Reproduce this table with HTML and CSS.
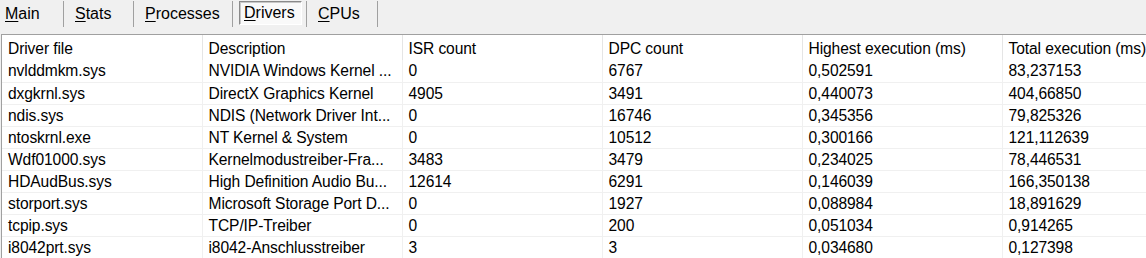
FILE: index.html
```html
<!DOCTYPE html>
<html lang="en">
<head>
  <meta charset="UTF-8">
  <title>Drivers</title>
  <link rel="stylesheet" href="styles.css">
</head>
<body>

  <div class="tabs">
    <div class="tab tab-main"><span><u>M</u>ain</span></div>
    <div class="tab tab-stats"><span><u>S</u>tats</span></div>
    <div class="tab tab-processes"><span><u>P</u>rocesses</span></div>
    <div class="tab tab-drivers"><span class="pressed"><u>D</u>rivers</span></div>
    <div class="tab tab-cpus"><span><u>C</u>PUs</span></div>
  </div>

  <div class="list">
    <table>
      <thead>
        <tr>
          <th>Driver file</th>
          <th>Description</th>
          <th>ISR count</th>
          <th>DPC count</th>
          <th>Highest execution (ms)</th>
          <th>Total execution (ms)</th>
        </tr>
      </thead>
      <tbody>
        <tr><td>nvlddmkm.sys</td><td>NVIDIA Windows Kernel ...</td><td>0</td><td>6767</td><td>0,502591</td><td>83,237153</td></tr>
        <tr><td>dxgkrnl.sys</td><td>DirectX Graphics Kernel</td><td>4905</td><td>3491</td><td>0,440073</td><td>404,66850</td></tr>
        <tr><td>ndis.sys</td><td>NDIS (Network Driver Int...</td><td>0</td><td>16746</td><td>0,345356</td><td>79,825326</td></tr>
        <tr><td>ntoskrnl.exe</td><td>NT Kernel &amp; System</td><td>0</td><td>10512</td><td>0,300166</td><td>121,112639</td></tr>
        <tr><td>Wdf01000.sys</td><td>Kernelmodustreiber-Fra...</td><td>3483</td><td>3479</td><td>0,234025</td><td>78,446531</td></tr>
        <tr><td>HDAudBus.sys</td><td>High Definition Audio Bu...</td><td>12614</td><td>6291</td><td>0,146039</td><td>166,350138</td></tr>
        <tr><td>storport.sys</td><td>Microsoft Storage Port D...</td><td>0</td><td>1927</td><td>0,088984</td><td>18,891629</td></tr>
        <tr><td>tcpip.sys</td><td>TCP/IP-Treiber</td><td>0</td><td>200</td><td>0,051034</td><td>0,914265</td></tr>
        <tr><td>i8042prt.sys</td><td>i8042-Anschlusstreiber</td><td>3</td><td>3</td><td>0,034680</td><td>0,127398</td></tr>
      </tbody>
    </table>
  </div>

</body>
</html>
```

FILE: styles.css
```css
* {
  margin: 0;
  padding: 0;
  box-sizing: border-box;
}

body {
  font-family: 'Liberation Sans', Arial, sans-serif;
  font-size: 16px;
  color: #000;
  background-color: #f0f0f0;
  overflow: hidden;
}

u {
  text-decoration-thickness: 1px;
  text-underline-offset: 2px;
}

.tabs {
  display: flex;
  height: 34px;
  background-color: #f0f0f0;
}

.tab {
  display: flex;
  align-items: center;
  height: 26px;
  margin-top: 1px;
  border-right: 1px solid #a0a0a0;
  padding-left: 11px;
}

.tab-main { width: 64px; padding-left: 5px; }
.tab-stats { width: 70px; }
.tab-processes { width: 99px; }
.tab-drivers { width: 74px; padding-left: 6px; }
.tab-cpus { width: 71px; }

.tab .pressed {
  display: flex;
  align-items: center;
  width: 63px;
  height: 24px;
  margin-top: -2px;
  padding-left: 4px;
  background-color: #f9f9f9;
  border: 1px solid;
  border-color: #8a8a8a #ffffff #ffffff #8a8a8a;
  box-shadow: inset 1px 1px 0 #c8c8c8;
}

.list {
  margin-left: 1px;
  height: 224px;
  background-color: #fff;
  border-top: 1px solid #a0a0a0;
  border-left: 1px solid #a0a0a0;
  overflow: hidden;
}

table {
  table-layout: fixed;
  border-collapse: collapse;
  width: 1200px;
  font-size: 15.6px;
  letter-spacing: -0.1px;
}

th, td {
  width: 200px;
  text-align: left;
  font-weight: normal;
  white-space: nowrap;
  overflow: hidden;
  padding: 0 0 0 6px;
}

th {
  height: 25px;
  padding-top: 2px;
}

th + th {
  border-left: 1px solid #e5e5e5;
}

td {
  height: 22px;
  border-bottom: 1px solid #f0f0f0;
  padding-top: 1px;
}

td + td {
  border-left: 1px solid #f0f0f0;
}
```
